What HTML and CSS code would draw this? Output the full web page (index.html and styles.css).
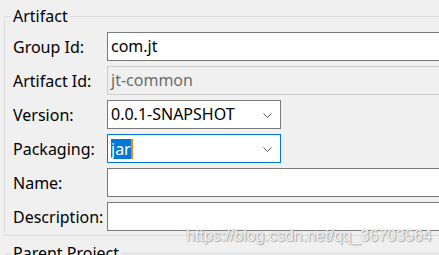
FILE: index.html
```html
<!DOCTYPE html>
<html lang="en">
<head>
  <meta charset="UTF-8">
  <title>New Maven Project</title>
  <link rel="stylesheet" href="styles.css">
</head>
<body>

  <div class="page">
    <fieldset class="group">
      <legend>Artifact</legend>
      <div class="form-grid">
        <label>Group Id:</label>
        <div class="field">com.jt</div>

        <label>Artifact Id:</label>
        <div class="field disabled">jt-common</div>

        <label>Version:</label>
        <div class="combo">
          <span>0.0.1-SNAPSHOT</span>
          <svg class="chevron" viewBox="0 0 9 5"><polyline points="0.5,0.5 4.5,4.5 8.5,0.5"/></svg>
        </div>

        <label>Packaging:</label>
        <div class="combo focus">
          <span class="sel">jar</span><span class="caret"></span>
          <svg class="chevron" viewBox="0 0 9 5"><polyline points="0.5,0.5 4.5,4.5 8.5,0.5"/></svg>
        </div>

        <label>Name:</label>
        <div class="field"></div>

        <label>Description:</label>
        <div class="field"></div>
      </div>
    </fieldset>

    <fieldset class="group parent">
      <legend>Parent Project</legend>
    </fieldset>
  </div>

  <!-- watermark -->
  <div class="watermark">https://blog.csdn.net/qq_36703564</div>

</body>
</html>
```

FILE: styles.css
```css
* { margin: 0; padding: 0; box-sizing: border-box; }
html, body { overflow: hidden; }
body {
  background: #f0f0f0;
  font-family: "Noto Sans", sans-serif;
  font-size: 16px;
  color: #000;
  width: 439px;
  height: 255px;
  position: relative;
}

.page { width: 480px; padding-left: 4px; }

.group {
  border: 1px solid #dcdcdc;
  border-radius: 3px;
  padding: 6px 8px 4px 8px;
  margin-top: 6px;
}
.group.parent { margin-top: 7px; height: 40px; }
.group legend { padding: 0 2px; margin-left: -2px; line-height: 20px; }

.form-grid {
  display: grid;
  grid-template-columns: 94px 1fr;
  grid-auto-rows: 29px;
  row-gap: 5px;
  align-items: center;
}
.form-grid label { line-height: 20px; white-space: nowrap; }

.field {
  height: 29px;
  border: 1px solid #7a7a7a;
  background: #fff;
  padding: 0 3px;
  line-height: 27px;
}
.field.disabled { border-color: #cccccc; background: #f0f0f0; color: #6d6d6d; }

.combo {
  width: 174px;
  height: 29px;
  border: 1px solid #7a7a7a;
  background: #fff;
  padding: 0 3px;
  line-height: 27px;
  display: flex;
  align-items: center;
  position: relative;
}
.combo.focus { border-color: #0078d7; }
.combo .sel { background: #0078d7; color: #fff; line-height: 20px; }
.combo .caret { width: 2px; height: 20px; background: #f0801a; }
.chevron {
  position: absolute;
  right: 8px;
  top: 12px;
  width: 9px;
  height: 5px;
  fill: none;
  stroke: #555;
  stroke-width: 1;
}

.watermark {
  position: absolute;
  left: 186px;
  top: 227px;
  font-family: "Liberation Sans", sans-serif;
  font-size: 16px;
  color: rgba(255,255,255,0.9);
  text-shadow: 0 0 1px #999, 1px 1px 1px #aaa;
  white-space: nowrap;
}
```
